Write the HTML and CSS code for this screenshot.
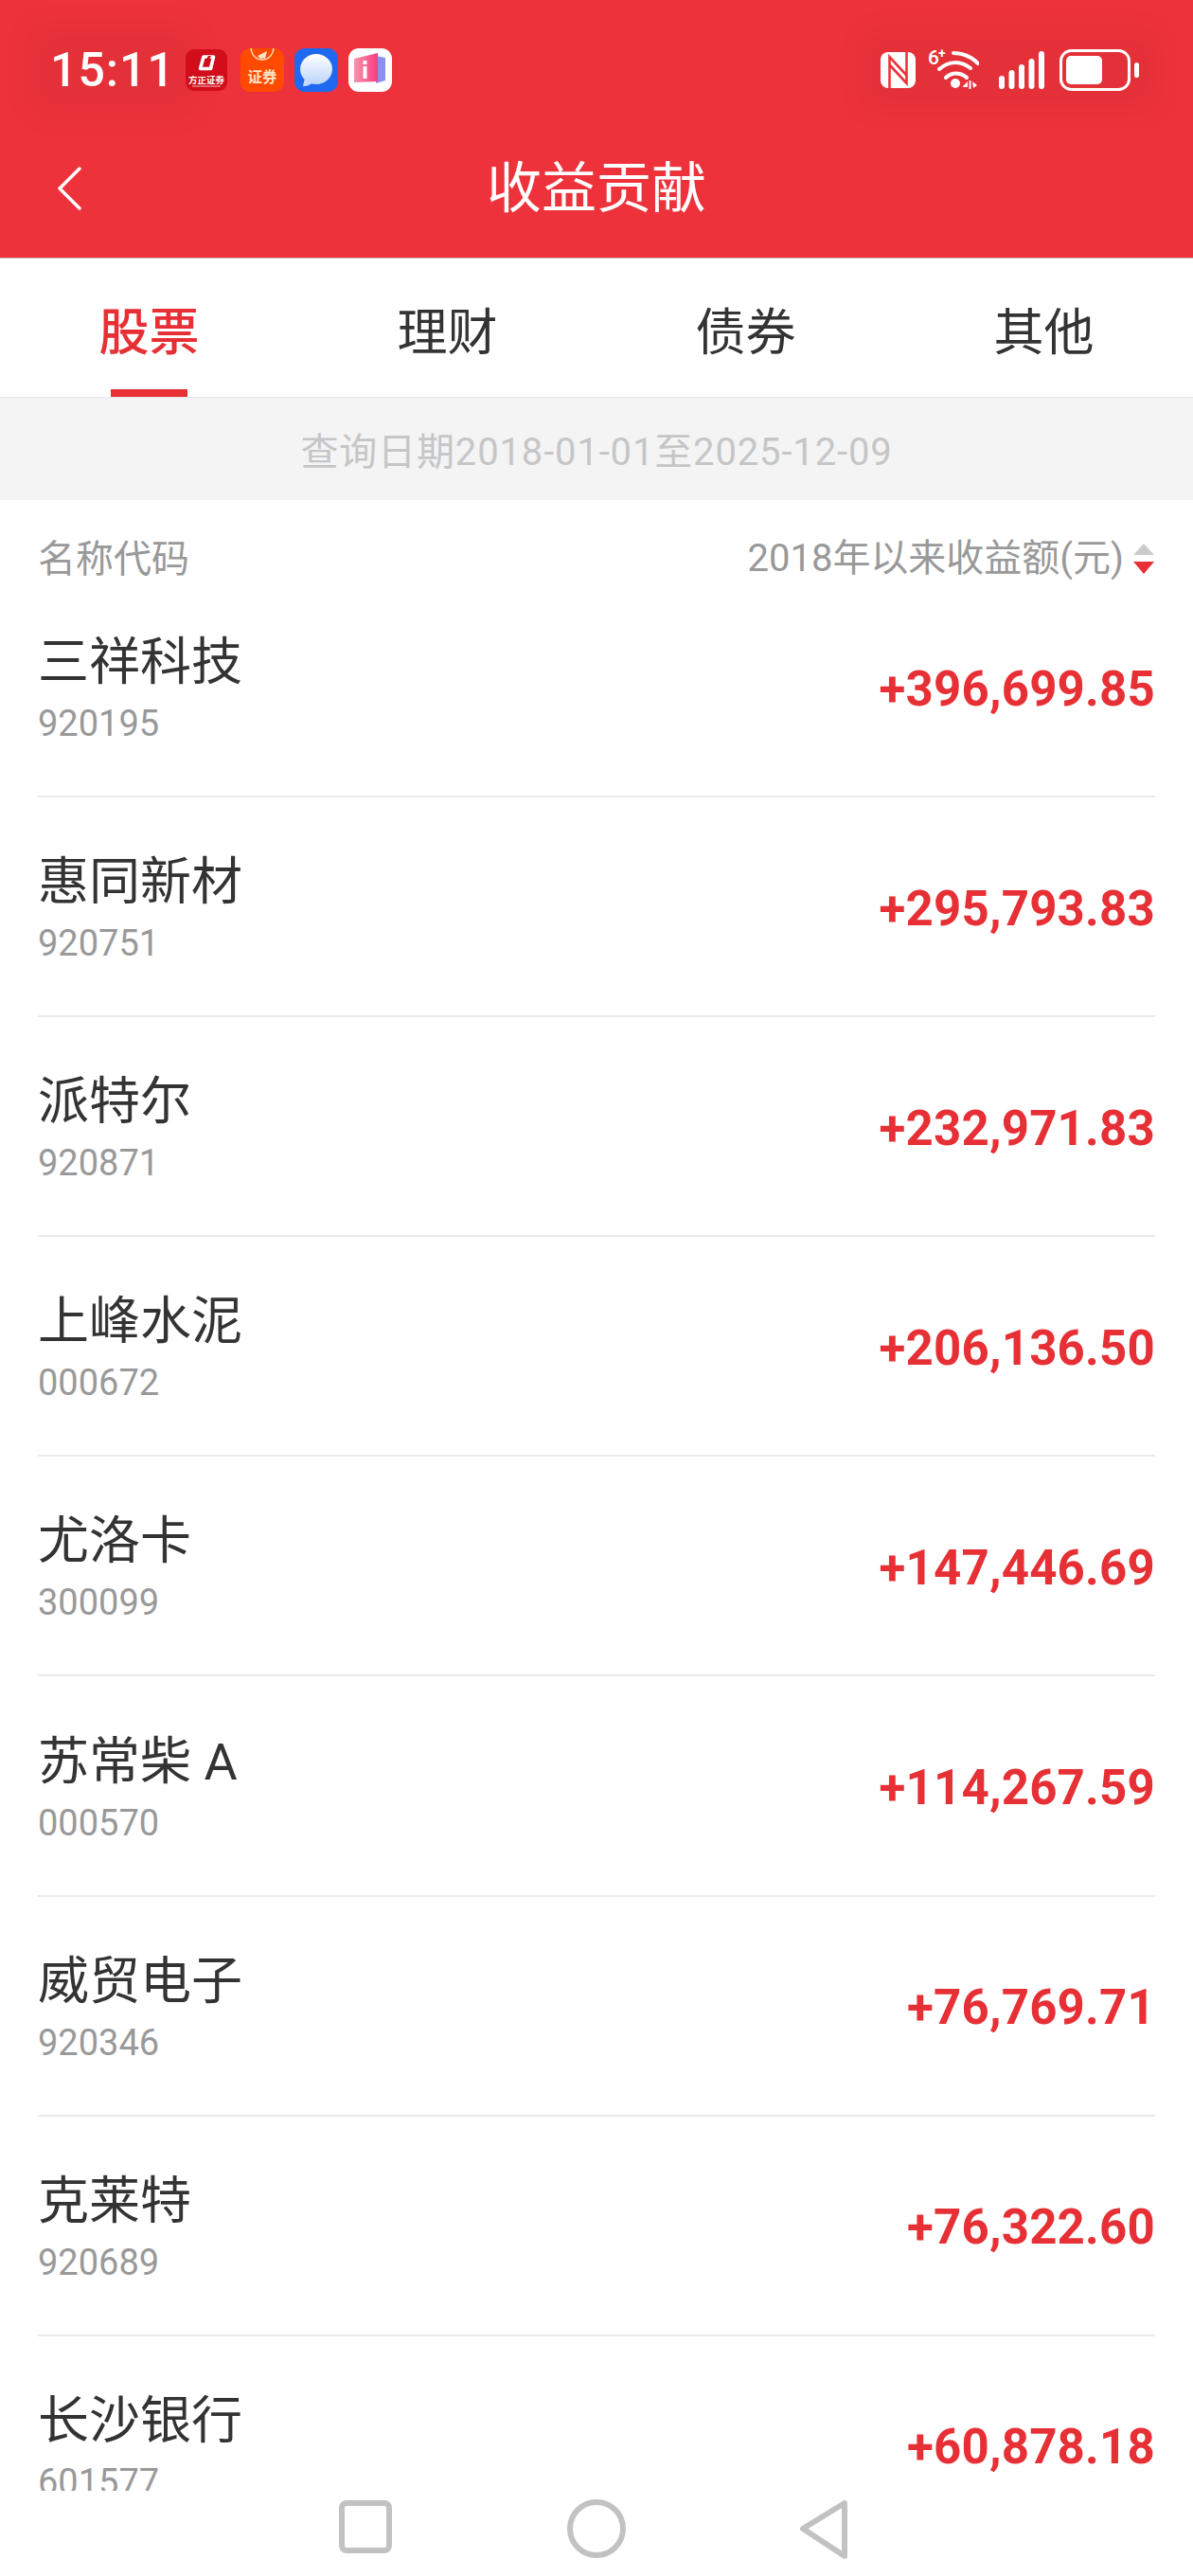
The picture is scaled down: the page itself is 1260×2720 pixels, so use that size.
FILE: index.html
```html
<!DOCTYPE html>
<html lang="zh-CN">
<head>
	<meta charset="UTF-8">
	<title>收益贡献</title>
	<link rel="stylesheet" href="styles.css">
</head>

<body>
	<div class="page">
		<!-- 顶部红色区域 -->
		<header class="header">
			<div class="status">
				<div class="status-left">
					<span class="clock">15:11</span>
					<svg class="app app1" width="44" height="44" viewBox="0 0 44 44">
						<rect width="44" height="44" rx="9" fill="#d10e1a"/>
						<path d="M19 8h10.500l-3 12.500H15.500z" fill="none" stroke="#fff" stroke-width="3.600" stroke-linejoin="round"/>
						<path d="M24 7l3 0-3 5-3 0z" fill="#d10e1a"/>
						<text x="22" y="36" class="app1-text">方正证券</text>
						<rect x="7" y="38.500" width="30" height="1" fill="#f6b9bc"/>
					</svg>
					<svg class="app" width="46" height="46" viewBox="0 0 46 46">
						<rect width="46" height="46" rx="10" fill="#ff4a00"/>
						<path d="M11 0c1 8 6 12 12 12s11-4 12-12" fill="none" stroke="#ffd9b0" stroke-width="1.500"/>
						<path d="M18 8l10-5-2 8-3-1-1 2z" fill="#ffe6cc"/>
						<text x="23" y="36" class="app2-text">证券</text>
					</svg>
					<svg class="app" width="46" height="46" viewBox="0 0 46 46">
						<defs>
							<linearGradient id="bubble" x1="0" y1="0" x2="0" y2="1">
								<stop offset="0" stop-color="#fff"/>
								<stop offset="1" stop-color="#bcd5fb"/>
							</linearGradient>
						</defs>
						<rect width="46" height="46" rx="11" fill="#1e69f0"/>
						<ellipse cx="23" cy="22" rx="17" ry="16" fill="url(#bubble)"/>
						<path d="M11 31l-2 9c5 0 9-2 11-5z" fill="#c6dbfb"/>
					</svg>
					<svg class="app" width="46" height="46" viewBox="0 0 46 46">
						<defs>
							<linearGradient id="book" x1="0" y1="0" x2="1" y2="0">
								<stop offset="0" stop-color="#fa92ac"/>
								<stop offset="1" stop-color="#f63d82"/>
							</linearGradient>
						</defs>
						<rect width="46" height="46" rx="11" fill="#fff"/>
						<path d="M29 8l10 2v24l-10 3z" fill="#8d8ff0"/>
						<path d="M6 11l25-6v30l-25 1z" fill="url(#book)"/>
						<rect x="15.500" y="13" width="4" height="4" fill="#fff"/>
						<rect x="15.500" y="19" width="4" height="13" fill="#fff"/>
					</svg>
				</div>
				<div class="status-right">
					<svg class="nfc" width="37" height="38" viewBox="0 0 37 38">
						<rect width="37" height="38" rx="8" fill="#fff"/>
						<path d="M9.500 38V5L27 24M27.500 0v33L10 14" fill="none" stroke="#ee323b" stroke-width="2.600"/>
					</svg>
					<svg class="wifi" width="54" height="50" viewBox="0 -8 54 50">
						<text x="0" y="15" class="wifi-six">6</text>
						<text x="11" y="8" class="wifi-plus">+</text>
						<path d="M27 3c10 0 19 4 26 11M12 20c10-9 23-9 33-1M19 29c6-6 16-6 22 0" fill="none" stroke="#fff" stroke-width="4" stroke-linecap="round"/>
						<circle cx="29" cy="35" r="5" fill="#fff"/>
						<path d="M37 38l5-5v6h-5zM43.500 32h2v9h-2zM47 33l5 4-4 3z" fill="#fff"/>
					</svg>
					<svg class="signal" width="48" height="40" viewBox="0 0 48 40">
						<rect x="0" y="26" width="6" height="14" rx="3" fill="#fff"/>
						<rect x="10.500" y="20" width="6" height="20" rx="3" fill="#fff"/>
						<rect x="21" y="14" width="6" height="26" rx="3" fill="#fff"/>
						<rect x="31.500" y="8" width="6" height="32" rx="3" fill="#fff"/>
						<rect x="42" y="0" width="6" height="40" rx="3" fill="#fff"/>
					</svg>
					<svg class="battery" width="84" height="44" viewBox="0 0 84 44">
						<rect x="1.500" y="1.500" width="72" height="41" rx="11" fill="none" stroke="#fff" stroke-width="3"/>
						<rect x="7" y="7" width="38" height="30" rx="5" fill="#fff"/>
						<rect x="79" y="14" width="5" height="16" rx="2.500" fill="#fff"/>
					</svg>
				</div>
			</div>
			<div class="title-bar">
				<svg class="back" width="26" height="46" viewBox="0 0 26 46">
					<path d="M24 2L3 23l21 21" fill="none" stroke="#fff" stroke-width="3.500" stroke-linecap="round" stroke-linejoin="round"/>
				</svg>
				<h1 class="title">收益贡献</h1>
				<span></span>
			</div>
		</header>

		<!-- tab -->
		<nav class="tabs">
			<a class="tab active">股票</a>
			<a class="tab">理财</a>
			<a class="tab">债券</a>
			<a class="tab">其他</a>
		</nav>

		<div class="date-bar">查询日期2018-01-01至2025-12-09</div>

		<div class="list-head">
			<span>名称代码</span>
			<span class="sort">2018年以来收益额(元)
				<svg width="24" height="34" viewBox="0 0 24 34">
					<path d="M12 1l11 12H1z" fill="#cccccc"/>
					<path d="M1 20h22L12 33z" fill="#e63035"/>
				</svg>
			</span>
		</div>

		<!-- 列表 -->
		<div class="list">
			<div class="row">
				<div><div class="name">三祥科技</div><div class="code">920195</div></div>
				<div class="amount">+396,699.85</div>
			</div>
			<div class="row">
				<div><div class="name">惠同新材</div><div class="code">920751</div></div>
				<div class="amount">+295,793.83</div>
			</div>
			<div class="row">
				<div><div class="name">派特尔</div><div class="code">920871</div></div>
				<div class="amount">+232,971.83</div>
			</div>
			<div class="row">
				<div><div class="name">上峰水泥</div><div class="code">000672</div></div>
				<div class="amount">+206,136.50</div>
			</div>
			<div class="row">
				<div><div class="name">尤洛卡</div><div class="code">300099</div></div>
				<div class="amount">+147,446.69</div>
			</div>
			<div class="row">
				<div><div class="name">苏常柴 A</div><div class="code">000570</div></div>
				<div class="amount">+114,267.59</div>
			</div>
			<div class="row">
				<div><div class="name">威贸电子</div><div class="code">920346</div></div>
				<div class="amount">+76,769.71</div>
			</div>
			<div class="row">
				<div><div class="name">克莱特</div><div class="code">920689</div></div>
				<div class="amount">+76,322.60</div>
			</div>
			<div class="row">
				<div><div class="name">长沙银行</div><div class="code">601577</div></div>
				<div class="amount">+60,878.18</div>
			</div>
		</div>

		<!-- 底部导航键 -->
		<footer class="nav-keys">
			<svg width="60" height="60" viewBox="0 0 60 60">
				<rect x="5" y="5" width="50" height="50" rx="5" fill="none" stroke="#c2c2c2" stroke-width="6"/>
			</svg>
			<svg width="64" height="64" viewBox="0 0 64 64">
				<circle cx="32" cy="32" r="28" fill="none" stroke="#c2c2c2" stroke-width="6"/>
			</svg>
			<svg width="54" height="66" viewBox="0 0 54 66">
				<path d="M48 5v56L4 32z" fill="none" stroke="#c2c2c2" stroke-width="6" stroke-linejoin="round"/>
			</svg>
		</footer>
	</div>
</body>

</html>
```

FILE: styles.css
```css
* {
	box-sizing: border-box;
}
body {
	margin: 0;
	background: #fff;
	font-family: Roboto, "Noto Sans CJK SC", sans-serif;
}
.page {
	width: 1260px;
	height: 2720px;
	display: flex;
	flex-direction: column;
	overflow: hidden;
}

/*顶部*/
.header {
	height: 273px;
	background: #ee323b;
	border-bottom: 1px solid #c9b5b6;
	color: #fff;
}
.status {
	height: 148px;
	display: flex;
	justify-content: space-between;
	align-items: center;
	padding: 0 57px 0 53px;
}
.status-left {
	display: flex;
	align-items: center;
	gap: 11px;
}
.clock {
	font-size: 50px;
	font-weight: 500;
	line-height: 50px;
	letter-spacing: 1px;
	background: rgba(0, 0, 0, .04);
	box-shadow: 0 0 30px 24px rgba(0, 0, 0, .04);
}
.app {
	display: block;
}
.app1 {
	margin-right: 3px;
}
.app1-text {
	font-size: 9.5px;
	font-weight: 700;
	fill: #fff;
	text-anchor: middle;
}
.app2-text {
	font-size: 15.5px;
	font-weight: 700;
	fill: #ffe3c8;
	text-anchor: middle;
}
.status-right {
	display: flex;
	align-items: center;
	background: rgba(0, 0, 0, .04);
	box-shadow: 0 0 30px 22px rgba(0, 0, 0, .04);
}
.wifi {
	margin: -8px 21px 0 13px;
}
.signal {
	margin-right: 16px;
}
.wifi-six {
	font-size: 21px;
	font-weight: 500;
	fill: #fff;
}
.wifi-plus {
	font-size: 14px;
	font-weight: 700;
	fill: #fff;
}
.title-bar {
	height: 124px;
	padding: 0 0 22px 60px;
	display: grid;
	grid-template-columns: 1fr auto 1fr;
	align-items: center;
}
.title {
	margin: 0;
	padding-right: 60px;
	font-size: 58px;
	font-weight: 400;
	line-height: 80px;
}

/*tab*/
.tabs {
	height: 147px;
	display: grid;
	grid-template-columns: repeat(4, 315px);
	border-bottom: 1px solid #e6e6e6;
}
.tab {
	display: flex;
	justify-content: center;
	padding-top: 41px;
	font-size: 53px;
	line-height: 76px;
	color: #333;
	position: relative;
}
.tab.active {
	color: #e63035;
	font-weight: 500;
}
.tab.active::after {
	content: "";
	position: absolute;
	left: 117px;
	bottom: 0;
	width: 81px;
	height: 8px;
	background: #e63035;
}

.date-bar {
	height: 108px;
	background: #f4f4f4;
	display: flex;
	justify-content: center;
	align-items: center;
	font-size: 40px;
	letter-spacing: .85px;
	color: #c6c6c6;
}

.list-head {
	height: 82px;
	padding: 42px 40px 0 40px;
	display: flex;
	justify-content: space-between;
	font-size: 40px;
	line-height: 42px;
	color: #999;
}
.sort {
	display: flex;
	align-items: center;
	gap: 9px;
}

/*列表*/
.list {
	flex: 1;
	min-height: 0;
	overflow: hidden;
	padding: 0 40px;
}
.row {
	height: 232.1px;
	display: flex;
	justify-content: space-between;
	align-items: center;
	border-bottom: 2px solid #ebebeb;
}
.name {
	padding-top: 2px;
	margin-bottom: -2px;
	font-size: 54px;
	line-height: 78px;
	color: #333;
}
.code {
	font-size: 38px;
	line-height: 54px;
	color: #999;
}
.amount {
	padding-top: 4px;
	font-size: 51px;
	font-weight: 700;
	letter-spacing: .2px;
	color: #e63035;
}

.nav-keys {
	height: 90px;
	padding: 8px 6px 0 0;
	background: #fff;
	display: flex;
	justify-content: center;
	align-items: flex-start;
	gap: 182px;
}
```
